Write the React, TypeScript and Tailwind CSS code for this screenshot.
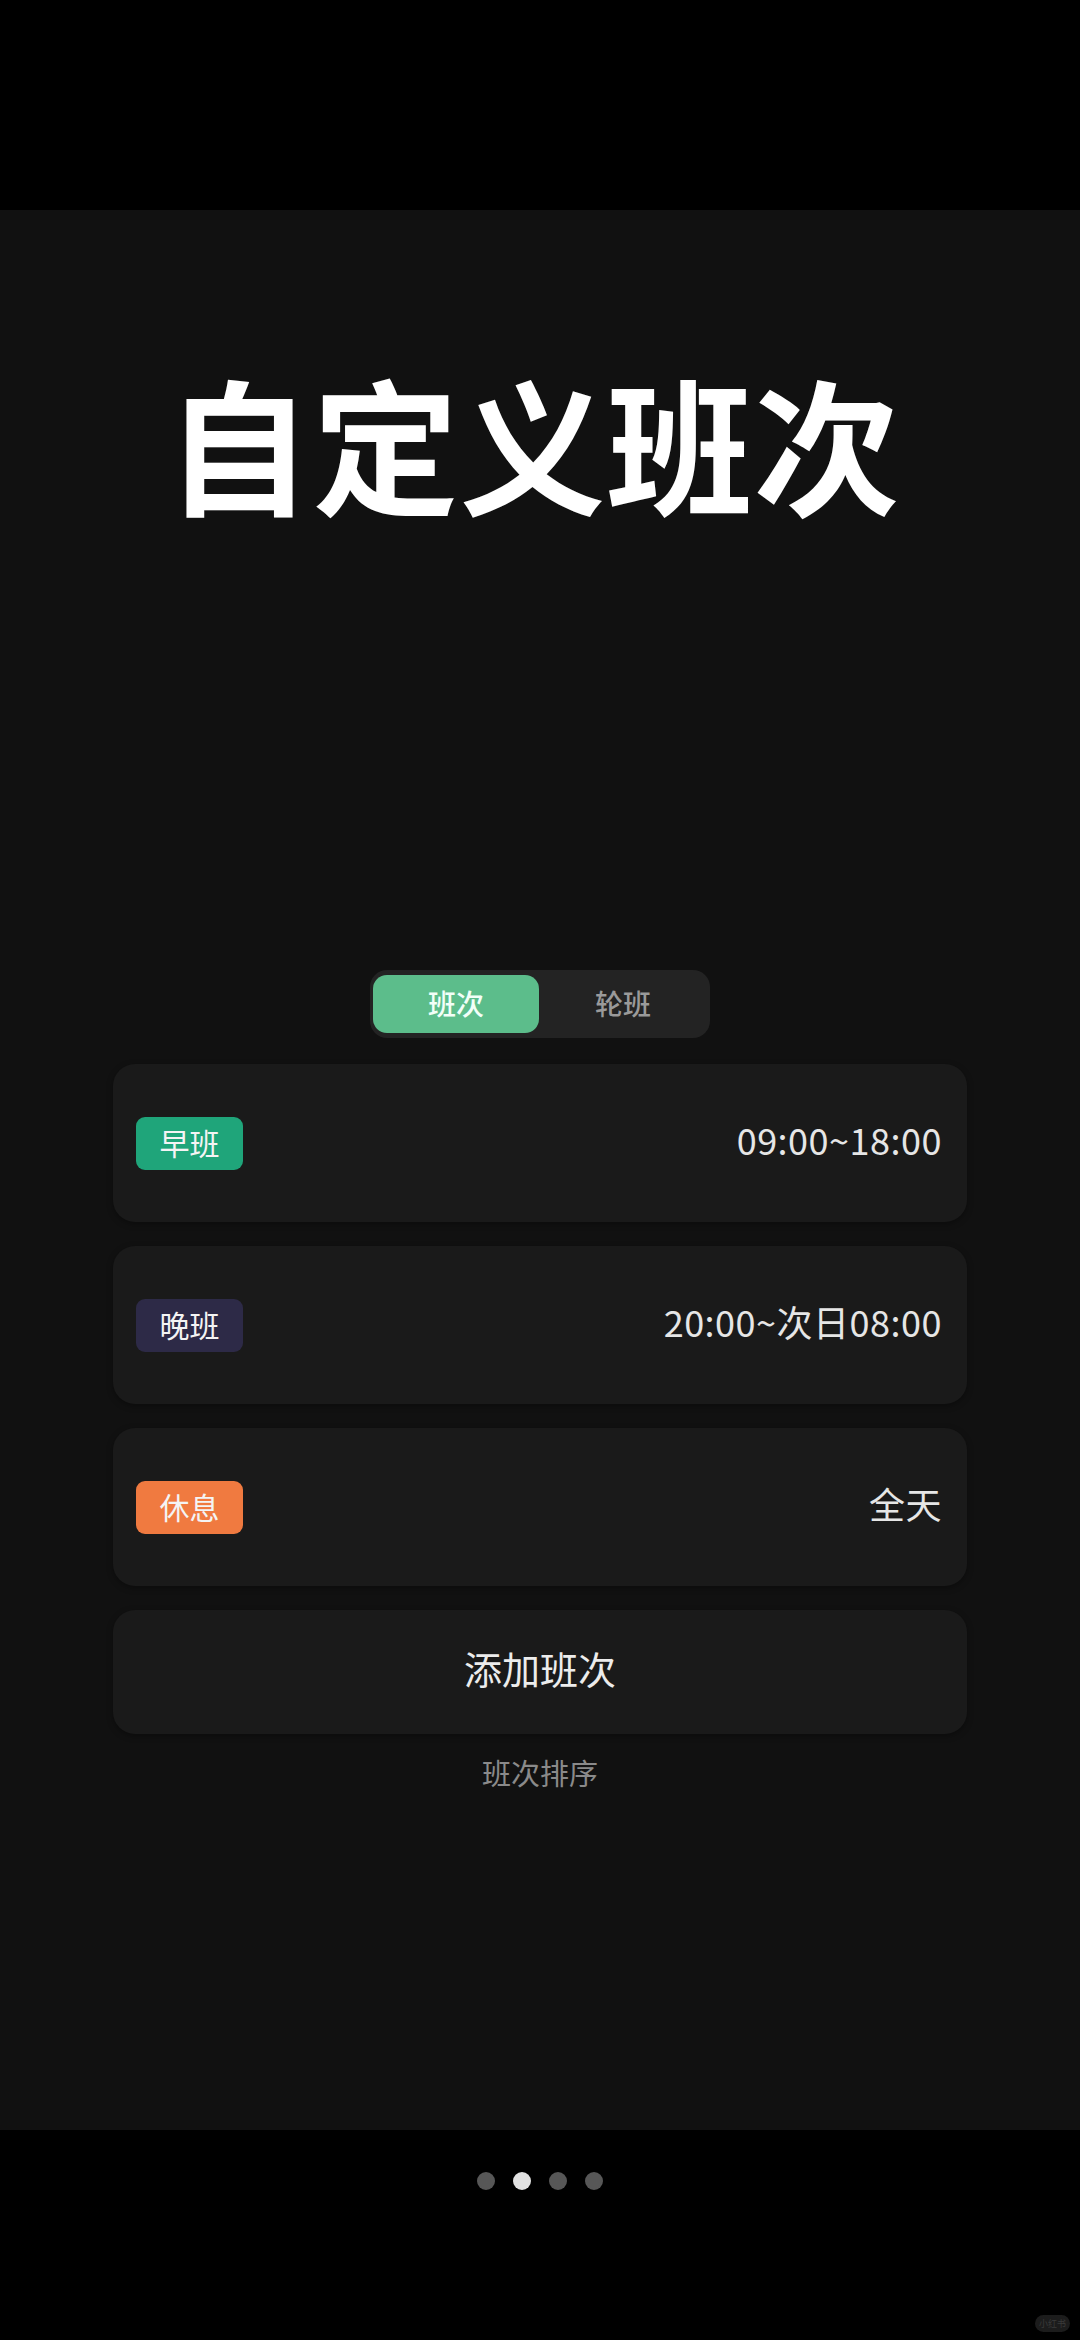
import React from "react";

const font = { fontFamily: '"Noto Sans CJK SC", "Noto Sans", sans-serif' };

function ShiftCard({ label, badge, time }: { label: string; badge: string; time: string }) {
  return (
    <div className="flex h-[158px] items-center justify-between rounded-[22px] bg-[#1a1a1a] pl-[23px] pr-[25px] shadow-[0_2px_6px_rgba(0,0,0,0.35)]">
      <div className={`flex h-[53px] w-[107px] items-center justify-center rounded-[9px] pb-[3px] text-[30px] leading-none text-[#f4f4f4] ${badge}`}>
        {label}
      </div>
      <div className="mb-[8px] text-[36px] leading-none tracking-[0.5px] text-[#e6e6e6]">{time}</div>
    </div>
  );
}

export default function App() {
  return (
    <div className="flex h-[2340px] w-[1080px] flex-col bg-black" style={font}>
      <div className="h-[210px] shrink-0 bg-black" />
      <div className="flex h-[1920px] shrink-0 flex-col items-center bg-[#111111]">
        <h1 className="mr-[14px] mt-[158px] text-[146px] font-bold leading-[146px] tracking-[1px] text-white">自定义班次</h1>
        <div className="mt-[456px] flex h-[68px] w-[340px] items-center rounded-[17px] bg-[#232323] p-[3px]">
          <div className="flex h-[58px] w-[166px] items-center justify-center rounded-[14px] bg-[#5cbd8b] pb-[2px] text-[28px] font-medium leading-none text-[#f2fff8]">
            班次
          </div>
          <div className="flex flex-1 items-center justify-center pb-[2px] text-[28px] font-medium leading-none text-[#9a9a9a]">
            轮班
          </div>
        </div>
        <div className="mt-[26px] flex w-[854px] flex-col gap-[24px]">
          <ShiftCard label="早班" badge="bg-[#1fa57a]" time="09:00~18:00" />
          <ShiftCard label="晚班" badge="bg-[#2d2a47]" time="20:00~次日08:00" />
          <ShiftCard label="休息" badge="bg-[#f07a40]" time="全天" />
          <div className="flex h-[124px] items-center justify-center rounded-[22px] bg-[#1a1a1a] pb-[8px] text-[38px] leading-none text-[#ececec] shadow-[0_2px_6px_rgba(0,0,0,0.35)]">
            添加班次
          </div>
        </div>
        <div className="mt-[24px] text-[29px] leading-none text-[#8a8a8a]">班次排序</div>
      </div>
      <div className="relative flex flex-1 items-start justify-center bg-black pt-[42px]">
        <div className="flex gap-[18px]">
          <div className="h-[18px] w-[18px] rounded-full bg-[#575757]" />
          <div className="h-[18px] w-[18px] rounded-full bg-[#e2e2e2]" />
          <div className="h-[18px] w-[18px] rounded-full bg-[#575757]" />
          <div className="h-[18px] w-[18px] rounded-full bg-[#575757]" />
        </div>
        <div className="absolute bottom-[8px] right-[10px] flex h-[17px] w-[35px] items-center justify-center rounded-full bg-[#1c1c1c] text-[9px] leading-none text-[#3a3a3a]">
          小红书
        </div>
      </div>
    </div>
  );
}
